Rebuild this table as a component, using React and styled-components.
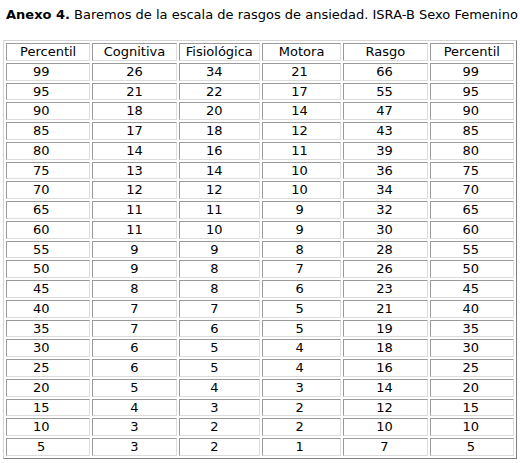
import React from "react";
import styled, { createGlobalStyle } from "styled-components";

const Global = createGlobalStyle`
  html, body { margin: 0; padding: 0; background: #fff; }
  body { font-family: Verdana, "DejaVu Sans", sans-serif; color: #000; }
`;

const Page = styled.div`
  padding: 7px 0 0 3px;
`;

const Title = styled.p`
  margin: 0 0 0 3px;
  font-size: 13px;
  line-height: 16px;
  white-space: nowrap;
  b { font-weight: bold; }
`;

const Table = styled.table`
  margin-top: 17px;
  width: 514px;
  border-collapse: separate;
  border-spacing: 2px;
  border: 1px solid;
  border-color: #d4d4d4 #808080 #808080 #d4d4d4;
  font-size: 13px;
  table-layout: fixed;
`;

const Cell = styled.td`
  border: 1px solid;
  border-color: #9a9a9a #dcdcdc #dcdcdc #9a9a9a;
  padding: 0 ${(p) => p.$pr || 0}px 0 0;
  text-align: center;
  height: 17.75px;
  line-height: 15.75px;
  box-sizing: border-box;
  white-space: nowrap;
`;

const headers = ["Percentil", "Cognitiva", "Fisiológica", "Motora", "Rasgo", "Percentil"];
const widths = [84, 84, 81, 79, 84, 84];
const shifts = [14, 0, 10, 4, 2, 2];

const rows = [
  [99, 26, 34, 21, 66, 99],
  [95, 21, 22, 17, 55, 95],
  [90, 18, 20, 14, 47, 90],
  [85, 17, 18, 12, 43, 85],
  [80, 14, 16, 11, 39, 80],
  [75, 13, 14, 10, 36, 75],
  [70, 12, 12, 10, 34, 70],
  [65, 11, 11, 9, 32, 65],
  [60, 11, 10, 9, 30, 60],
  [55, 9, 9, 8, 28, 55],
  [50, 9, 8, 7, 26, 50],
  [45, 8, 8, 6, 23, 45],
  [40, 7, 7, 5, 21, 40],
  [35, 7, 6, 5, 19, 35],
  [30, 6, 5, 4, 18, 30],
  [25, 6, 5, 4, 16, 25],
  [20, 5, 4, 3, 14, 20],
  [15, 4, 3, 2, 12, 15],
  [10, 3, 2, 2, 10, 10],
  [5, 3, 2, 1, 7, 5],
];

export default function App() {
  return (
    <Page>
      <Global />
      <Title>
        <b>Anexo 4.</b> Baremos de la escala de rasgos de ansiedad. ISRA-B Sexo Femenino
      </Title>
      <Table>
        <colgroup>
          {widths.map((w, i) => (
            <col key={i} style={{ width: w }} />
          ))}
        </colgroup>
        <tbody>
          <tr>
            {headers.map((h, i) => (
              <Cell key={i}>{h}</Cell>
            ))}
          </tr>
          {rows.map((r, ri) => (
            <tr key={ri}>
              {r.map((v, ci) => (
                <Cell key={ci} $pr={shifts[ci]}>
                  {v}
                </Cell>
              ))}
            </tr>
          ))}
        </tbody>
      </Table>
    </Page>
  );
}
